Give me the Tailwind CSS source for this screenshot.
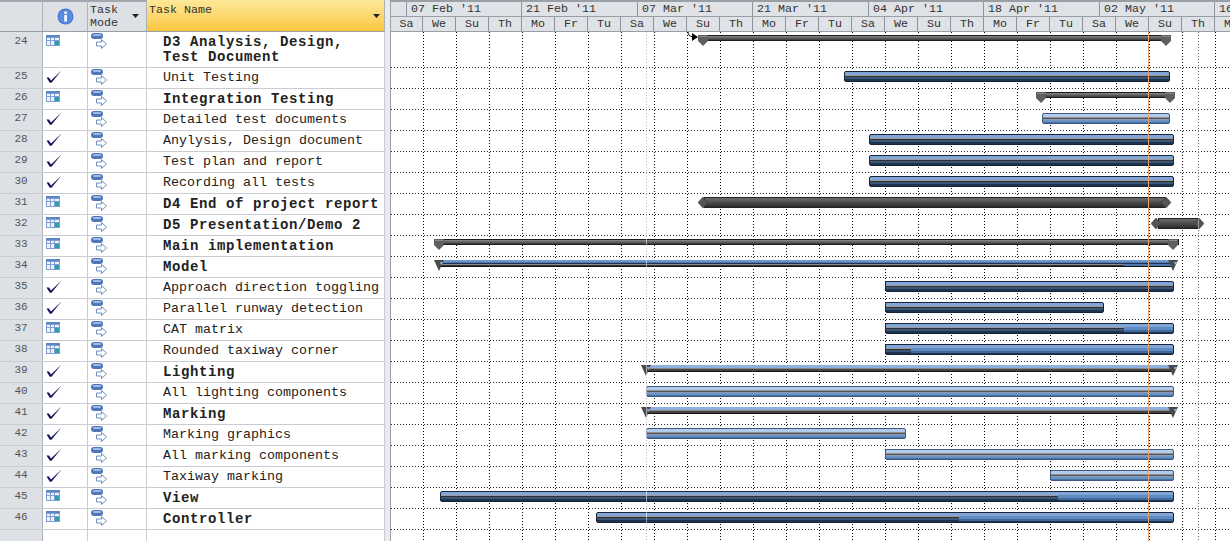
<!DOCTYPE html>
<html>
<head>
<meta charset="utf-8">
<script src="https://cdn.jsdelivr.net/npm/@tailwindcss/browser@4"></script>
</head>
<body class="m-0 bg-white">
<svg class="hidden">
  <symbol id="cal" viewBox="0 0 14 11"><rect width="14" height="11" fill="#7f9fd2"/><rect x="0" y="0" width="14" height="2" fill="#5f86c4"/><g fill="#eef3fb"><rect x="1" y="3" width="3" height="2"/><rect x="5" y="3" width="3" height="2"/><rect x="9" y="3" width="4" height="2"/><rect x="1" y="6" width="3" height="4"/><rect x="5" y="6" width="3" height="4"/></g><rect x="9" y="6" width="4" height="4" fill="#2aa0b0"/></symbol>
  <symbol id="chk" viewBox="0 0 16 13"><path d="M0.5 7.5 L3 7.5 L5 10.5 L15.5 0.5 L5.5 12.8 L3.8 12.8 Z" fill="#14145a"/></symbol>
  <symbol id="mode" viewBox="0 0 16 16"><rect x="0" y="0" width="12" height="6" rx="3" fill="#4f78b8"/><rect x="2" y="1" width="8" height="2" rx="1" fill="#9dbbe6"/><path d="M5.5 9 H10.5 V6.5 L15.5 11 L10.5 15.5 V13 H5.5 Z" fill="#fff" stroke="#6f8fc0"/></symbol>
  <symbol id="capg" viewBox="0 0 10 11"><path d="M0 0 H10 V6 L5 11 L0 6 Z" fill="#5f5f5f"/><path d="M1 1 H9 V2 H1 Z" fill="#8a8a8a"/></symbol>
  <symbol id="capb" viewBox="0 0 10 11"><path d="M0 0 H10 L5 11 Z" fill="#4a4a4a"/><path d="M6 2 H9.5 L7 5 Z" fill="#8fb0de"/></symbol>
  <symbol id="dia" viewBox="0 0 10 11"><path d="M5 0 L10 5.5 L5 11 L0 5.5 Z" fill="#555" stroke="#333" stroke-width="0.5"/></symbol>
</svg>

<div class="flex w-[1230px] h-[541px] overflow-hidden font-['Liberation_Mono',monospace] text-[13.33px] text-[#222]">

  <!-- Task table -->
  <div class="w-[385px] shrink-0 flex flex-col">
    <div class="flex h-[32px] shrink-0 border-b border-[#9a9ea5] text-[11.67px] leading-[13px] text-[#333]">
      <div class="w-[43px] bg-[#dde1e6] border-r border-[#aeb2b8] border-t-2 border-t-[#a3a7ad]"></div>
      <div class="w-[45px] bg-[#dde1e6] border-r border-[#aeb2b8] border-t-2 border-t-[#a3a7ad] flex items-center justify-center">
        <svg width="17" height="17" viewBox="0 0 17 17"><circle cx="8.5" cy="8.5" r="8" fill="#3f74cf"/><circle cx="8.5" cy="8.5" r="7" fill="#5a8ae0"/><rect x="7.3" y="3.5" width="2.6" height="2.4" fill="#fff"/><rect x="7.3" y="7" width="2.6" height="6.5" fill="#fff"/></svg>
      </div>
      <div class="w-[59px] bg-[#dde1e6] border-r border-[#aeb2b8] border-t-2 border-t-[#a3a7ad] pl-[2px] pt-[2px] relative">Task<br>Mode
        <svg class="absolute left-[44px] top-[12px]" width="7" height="4" viewBox="0 0 7 4"><path d="M0 0 H7 L3.5 4 Z" fill="#222"/></svg>
      </div>
      <div class="w-[238px] bg-gradient-to-b from-[#fde999] to-[#fbc63c] border-r border-[#aeb2b8] pl-[2px] pt-[4px] relative">Task Name
        <svg class="absolute left-[226px] top-[14px]" width="7" height="4" viewBox="0 0 7 4"><path d="M0 0 H7 L3.5 4 Z" fill="#222"/></svg>
      </div>
    </div>

    <div class="flex h-[36px] shrink-0 border-b border-[#c9cdd3]">
      <div class="w-[43px] bg-[#dde1e6] border-r border-[#aeb2b8] text-[11px] text-[#555] text-center pt-[1px]">24</div>
      <div class="w-[45px] border-r border-[#c9cdd3] pl-[3px] pt-[3px]"><svg width="14" height="11"><use href="#cal"/></svg></div>
      <div class="w-[59px] border-r border-[#c9cdd3] pl-[3px] pt-[1px]"><svg width="16" height="16"><use href="#mode"/></svg></div>
      <div class="w-[238px] border-r border-[#c9cdd3] pl-[16px] pt-[3px] text-[14px] tracking-[0.6px] leading-[15px] font-bold">D3 Analysis, Design,<br>Test Document</div>
    </div>

    <div class="flex h-[21px] shrink-0 border-b border-[#c9cdd3]"><div class="w-[43px] bg-[#dde1e6] border-r border-[#aeb2b8] text-[11px] text-[#555] text-center leading-[17px]">25</div><div class="w-[45px] border-r border-[#c9cdd3] pl-[3px] pt-[2px]"><svg width="16" height="13"><use href="#chk"/></svg></div><div class="w-[59px] border-r border-[#c9cdd3] pl-[3px] pt-[1px]"><svg width="16" height="16"><use href="#mode"/></svg></div><div class="w-[238px] border-r border-[#c9cdd3] pl-[16px] leading-[19px]">Unit Testing</div></div>
    <div class="flex h-[21px] shrink-0 border-b border-[#c9cdd3]"><div class="w-[43px] bg-[#dde1e6] border-r border-[#aeb2b8] text-[11px] text-[#555] text-center leading-[17px]">26</div><div class="w-[45px] border-r border-[#c9cdd3] pl-[3px] pt-[2px]"><svg width="14" height="11"><use href="#cal"/></svg></div><div class="w-[59px] border-r border-[#c9cdd3] pl-[3px] pt-[1px]"><svg width="16" height="16"><use href="#mode"/></svg></div><div class="w-[238px] border-r border-[#c9cdd3] pl-[16px] leading-[21px] text-[14px] tracking-[0.6px] font-bold">Integration Testing</div></div>
    <div class="flex h-[21px] shrink-0 border-b border-[#c9cdd3]"><div class="w-[43px] bg-[#dde1e6] border-r border-[#aeb2b8] text-[11px] text-[#555] text-center leading-[17px]">27</div><div class="w-[45px] border-r border-[#c9cdd3] pl-[3px] pt-[2px]"><svg width="16" height="13"><use href="#chk"/></svg></div><div class="w-[59px] border-r border-[#c9cdd3] pl-[3px] pt-[1px]"><svg width="16" height="16"><use href="#mode"/></svg></div><div class="w-[238px] border-r border-[#c9cdd3] pl-[16px] leading-[19px]">Detailed test documents</div></div>
    <div class="flex h-[21px] shrink-0 border-b border-[#c9cdd3]"><div class="w-[43px] bg-[#dde1e6] border-r border-[#aeb2b8] text-[11px] text-[#555] text-center leading-[17px]">28</div><div class="w-[45px] border-r border-[#c9cdd3] pl-[3px] pt-[2px]"><svg width="16" height="13"><use href="#chk"/></svg></div><div class="w-[59px] border-r border-[#c9cdd3] pl-[3px] pt-[1px]"><svg width="16" height="16"><use href="#mode"/></svg></div><div class="w-[238px] border-r border-[#c9cdd3] pl-[16px] leading-[19px]">Anylysis, Design document</div></div>
    <div class="flex h-[21px] shrink-0 border-b border-[#c9cdd3]"><div class="w-[43px] bg-[#dde1e6] border-r border-[#aeb2b8] text-[11px] text-[#555] text-center leading-[17px]">29</div><div class="w-[45px] border-r border-[#c9cdd3] pl-[3px] pt-[2px]"><svg width="16" height="13"><use href="#chk"/></svg></div><div class="w-[59px] border-r border-[#c9cdd3] pl-[3px] pt-[1px]"><svg width="16" height="16"><use href="#mode"/></svg></div><div class="w-[238px] border-r border-[#c9cdd3] pl-[16px] leading-[19px]">Test plan and report</div></div>
    <div class="flex h-[21px] shrink-0 border-b border-[#c9cdd3]"><div class="w-[43px] bg-[#dde1e6] border-r border-[#aeb2b8] text-[11px] text-[#555] text-center leading-[17px]">30</div><div class="w-[45px] border-r border-[#c9cdd3] pl-[3px] pt-[2px]"><svg width="16" height="13"><use href="#chk"/></svg></div><div class="w-[59px] border-r border-[#c9cdd3] pl-[3px] pt-[1px]"><svg width="16" height="16"><use href="#mode"/></svg></div><div class="w-[238px] border-r border-[#c9cdd3] pl-[16px] leading-[19px]">Recording all tests</div></div>
    <div class="flex h-[21px] shrink-0 border-b border-[#c9cdd3]"><div class="w-[43px] bg-[#dde1e6] border-r border-[#aeb2b8] text-[11px] text-[#555] text-center leading-[17px]">31</div><div class="w-[45px] border-r border-[#c9cdd3] pl-[3px] pt-[2px]"><svg width="14" height="11"><use href="#cal"/></svg></div><div class="w-[59px] border-r border-[#c9cdd3] pl-[3px] pt-[1px]"><svg width="16" height="16"><use href="#mode"/></svg></div><div class="w-[238px] border-r border-[#c9cdd3] pl-[16px] leading-[21px] text-[14px] tracking-[0.6px] font-bold">D4 End of project report</div></div>
    <div class="flex h-[21px] shrink-0 border-b border-[#c9cdd3]"><div class="w-[43px] bg-[#dde1e6] border-r border-[#aeb2b8] text-[11px] text-[#555] text-center leading-[17px]">32</div><div class="w-[45px] border-r border-[#c9cdd3] pl-[3px] pt-[2px]"><svg width="14" height="11"><use href="#cal"/></svg></div><div class="w-[59px] border-r border-[#c9cdd3] pl-[3px] pt-[1px]"><svg width="16" height="16"><use href="#mode"/></svg></div><div class="w-[238px] border-r border-[#c9cdd3] pl-[16px] leading-[21px] text-[14px] tracking-[0.6px] font-bold">D5 Presentation/Demo 2</div></div>
    <div class="flex h-[21px] shrink-0 border-b border-[#c9cdd3]"><div class="w-[43px] bg-[#dde1e6] border-r border-[#aeb2b8] text-[11px] text-[#555] text-center leading-[17px]">33</div><div class="w-[45px] border-r border-[#c9cdd3] pl-[3px] pt-[2px]"><svg width="14" height="11"><use href="#cal"/></svg></div><div class="w-[59px] border-r border-[#c9cdd3] pl-[3px] pt-[1px]"><svg width="16" height="16"><use href="#mode"/></svg></div><div class="w-[238px] border-r border-[#c9cdd3] pl-[16px] leading-[21px] text-[14px] tracking-[0.6px] font-bold">Main implementation</div></div>
    <div class="flex h-[21px] shrink-0 border-b border-[#c9cdd3]"><div class="w-[43px] bg-[#dde1e6] border-r border-[#aeb2b8] text-[11px] text-[#555] text-center leading-[17px]">34</div><div class="w-[45px] border-r border-[#c9cdd3] pl-[3px] pt-[2px]"><svg width="14" height="11"><use href="#cal"/></svg></div><div class="w-[59px] border-r border-[#c9cdd3] pl-[3px] pt-[1px]"><svg width="16" height="16"><use href="#mode"/></svg></div><div class="w-[238px] border-r border-[#c9cdd3] pl-[16px] leading-[21px] text-[14px] tracking-[0.6px] font-bold">Model</div></div>
    <div class="flex h-[21px] shrink-0 border-b border-[#c9cdd3]"><div class="w-[43px] bg-[#dde1e6] border-r border-[#aeb2b8] text-[11px] text-[#555] text-center leading-[17px]">35</div><div class="w-[45px] border-r border-[#c9cdd3] pl-[3px] pt-[2px]"><svg width="16" height="13"><use href="#chk"/></svg></div><div class="w-[59px] border-r border-[#c9cdd3] pl-[3px] pt-[1px]"><svg width="16" height="16"><use href="#mode"/></svg></div><div class="w-[238px] border-r border-[#c9cdd3] pl-[16px] leading-[19px]">Approach direction toggling</div></div>
    <div class="flex h-[21px] shrink-0 border-b border-[#c9cdd3]"><div class="w-[43px] bg-[#dde1e6] border-r border-[#aeb2b8] text-[11px] text-[#555] text-center leading-[17px]">36</div><div class="w-[45px] border-r border-[#c9cdd3] pl-[3px] pt-[2px]"><svg width="16" height="13"><use href="#chk"/></svg></div><div class="w-[59px] border-r border-[#c9cdd3] pl-[3px] pt-[1px]"><svg width="16" height="16"><use href="#mode"/></svg></div><div class="w-[238px] border-r border-[#c9cdd3] pl-[16px] leading-[19px]">Parallel runway detection</div></div>
    <div class="flex h-[21px] shrink-0 border-b border-[#c9cdd3]"><div class="w-[43px] bg-[#dde1e6] border-r border-[#aeb2b8] text-[11px] text-[#555] text-center leading-[17px]">37</div><div class="w-[45px] border-r border-[#c9cdd3] pl-[3px] pt-[2px]"><svg width="14" height="11"><use href="#cal"/></svg></div><div class="w-[59px] border-r border-[#c9cdd3] pl-[3px] pt-[1px]"><svg width="16" height="16"><use href="#mode"/></svg></div><div class="w-[238px] border-r border-[#c9cdd3] pl-[16px] leading-[19px]">CAT matrix</div></div>
    <div class="flex h-[21px] shrink-0 border-b border-[#c9cdd3]"><div class="w-[43px] bg-[#dde1e6] border-r border-[#aeb2b8] text-[11px] text-[#555] text-center leading-[17px]">38</div><div class="w-[45px] border-r border-[#c9cdd3] pl-[3px] pt-[2px]"><svg width="14" height="11"><use href="#cal"/></svg></div><div class="w-[59px] border-r border-[#c9cdd3] pl-[3px] pt-[1px]"><svg width="16" height="16"><use href="#mode"/></svg></div><div class="w-[238px] border-r border-[#c9cdd3] pl-[16px] leading-[19px]">Rounded taxiway corner</div></div>
    <div class="flex h-[21px] shrink-0 border-b border-[#c9cdd3]"><div class="w-[43px] bg-[#dde1e6] border-r border-[#aeb2b8] text-[11px] text-[#555] text-center leading-[17px]">39</div><div class="w-[45px] border-r border-[#c9cdd3] pl-[3px] pt-[2px]"><svg width="16" height="13"><use href="#chk"/></svg></div><div class="w-[59px] border-r border-[#c9cdd3] pl-[3px] pt-[1px]"><svg width="16" height="16"><use href="#mode"/></svg></div><div class="w-[238px] border-r border-[#c9cdd3] pl-[16px] leading-[21px] text-[14px] tracking-[0.6px] font-bold">Lighting</div></div>
    <div class="flex h-[21px] shrink-0 border-b border-[#c9cdd3]"><div class="w-[43px] bg-[#dde1e6] border-r border-[#aeb2b8] text-[11px] text-[#555] text-center leading-[17px]">40</div><div class="w-[45px] border-r border-[#c9cdd3] pl-[3px] pt-[2px]"><svg width="16" height="13"><use href="#chk"/></svg></div><div class="w-[59px] border-r border-[#c9cdd3] pl-[3px] pt-[1px]"><svg width="16" height="16"><use href="#mode"/></svg></div><div class="w-[238px] border-r border-[#c9cdd3] pl-[16px] leading-[19px]">All lighting components</div></div>
    <div class="flex h-[21px] shrink-0 border-b border-[#c9cdd3]"><div class="w-[43px] bg-[#dde1e6] border-r border-[#aeb2b8] text-[11px] text-[#555] text-center leading-[17px]">41</div><div class="w-[45px] border-r border-[#c9cdd3] pl-[3px] pt-[2px]"><svg width="16" height="13"><use href="#chk"/></svg></div><div class="w-[59px] border-r border-[#c9cdd3] pl-[3px] pt-[1px]"><svg width="16" height="16"><use href="#mode"/></svg></div><div class="w-[238px] border-r border-[#c9cdd3] pl-[16px] leading-[21px] text-[14px] tracking-[0.6px] font-bold">Marking</div></div>
    <div class="flex h-[21px] shrink-0 border-b border-[#c9cdd3]"><div class="w-[43px] bg-[#dde1e6] border-r border-[#aeb2b8] text-[11px] text-[#555] text-center leading-[17px]">42</div><div class="w-[45px] border-r border-[#c9cdd3] pl-[3px] pt-[2px]"><svg width="16" height="13"><use href="#chk"/></svg></div><div class="w-[59px] border-r border-[#c9cdd3] pl-[3px] pt-[1px]"><svg width="16" height="16"><use href="#mode"/></svg></div><div class="w-[238px] border-r border-[#c9cdd3] pl-[16px] leading-[19px]">Marking graphics</div></div>
    <div class="flex h-[21px] shrink-0 border-b border-[#c9cdd3]"><div class="w-[43px] bg-[#dde1e6] border-r border-[#aeb2b8] text-[11px] text-[#555] text-center leading-[17px]">43</div><div class="w-[45px] border-r border-[#c9cdd3] pl-[3px] pt-[2px]"><svg width="16" height="13"><use href="#chk"/></svg></div><div class="w-[59px] border-r border-[#c9cdd3] pl-[3px] pt-[1px]"><svg width="16" height="16"><use href="#mode"/></svg></div><div class="w-[238px] border-r border-[#c9cdd3] pl-[16px] leading-[19px]">All marking components</div></div>
    <div class="flex h-[21px] shrink-0 border-b border-[#c9cdd3]"><div class="w-[43px] bg-[#dde1e6] border-r border-[#aeb2b8] text-[11px] text-[#555] text-center leading-[17px]">44</div><div class="w-[45px] border-r border-[#c9cdd3] pl-[3px] pt-[2px]"><svg width="16" height="13"><use href="#chk"/></svg></div><div class="w-[59px] border-r border-[#c9cdd3] pl-[3px] pt-[1px]"><svg width="16" height="16"><use href="#mode"/></svg></div><div class="w-[238px] border-r border-[#c9cdd3] pl-[16px] leading-[19px]">Taxiway marking</div></div>
    <div class="flex h-[21px] shrink-0 border-b border-[#c9cdd3]"><div class="w-[43px] bg-[#dde1e6] border-r border-[#aeb2b8] text-[11px] text-[#555] text-center leading-[17px]">45</div><div class="w-[45px] border-r border-[#c9cdd3] pl-[3px] pt-[2px]"><svg width="14" height="11"><use href="#cal"/></svg></div><div class="w-[59px] border-r border-[#c9cdd3] pl-[3px] pt-[1px]"><svg width="16" height="16"><use href="#mode"/></svg></div><div class="w-[238px] border-r border-[#c9cdd3] pl-[16px] leading-[21px] text-[14px] tracking-[0.6px] font-bold">View</div></div>
    <div class="flex h-[21px] shrink-0 border-b border-[#c9cdd3]"><div class="w-[43px] bg-[#dde1e6] border-r border-[#aeb2b8] text-[11px] text-[#555] text-center leading-[17px]">46</div><div class="w-[45px] border-r border-[#c9cdd3] pl-[3px] pt-[2px]"><svg width="14" height="11"><use href="#cal"/></svg></div><div class="w-[59px] border-r border-[#c9cdd3] pl-[3px] pt-[1px]"><svg width="16" height="16"><use href="#mode"/></svg></div><div class="w-[238px] border-r border-[#c9cdd3] pl-[16px] leading-[21px] text-[14px] tracking-[0.6px] font-bold">Controller</div></div>

    <div class="flex flex-1">
      <div class="w-[43px] bg-[#dde1e6] border-r border-[#aeb2b8]"></div>
      <div class="w-[45px] border-r border-[#c9cdd3]"></div>
      <div class="w-[59px] border-r border-[#c9cdd3]"></div>
      <div class="w-[238px] border-r border-[#c9cdd3]"></div>
    </div>
  </div>

  <!-- Splitter -->
  <div class="w-[6px] shrink-0 bg-[#e9ebee] border-r border-[#9a9ea5]"></div>

  <!-- Gantt chart -->
  <div class="relative w-[839px] shrink-0 flex flex-col overflow-hidden">
    <div class="h-[32px] shrink-0 flex flex-col bg-[#dfe2e6] border-t-2 border-[#9a9ea5] border-b text-[11.67px] text-[#333] whitespace-nowrap">
      <div class="flex h-[15px] border-b border-[#9a9ea5] leading-[14px]">
        <div class="w-[16px] shrink-0 border-r border-[#8f949c]"></div>
        <div class="w-[115px] shrink-0 border-r border-[#8f949c] pl-[4px]">07 Feb '11</div>
        <div class="w-[116px] shrink-0 border-r border-[#8f949c] pl-[4px]">21 Feb '11</div>
        <div class="w-[115px] shrink-0 border-r border-[#8f949c] pl-[4px]">07 Mar '11</div>
        <div class="w-[116px] shrink-0 border-r border-[#8f949c] pl-[4px]">21 Mar '11</div>
        <div class="w-[115px] shrink-0 border-r border-[#8f949c] pl-[4px]">04 Apr '11</div>
        <div class="w-[116px] shrink-0 border-r border-[#8f949c] pl-[4px]">18 Apr '11</div>
        <div class="w-[115px] shrink-0 border-r border-[#8f949c] pl-[4px]">02 May '11</div>
        <div class="w-[116px] shrink-0 pl-[4px]">16 May '11</div>
      </div>
      <div class="flex h-[15px] leading-[14px] text-center">
        <div class="w-[32px] shrink-0 border-r border-[#8f949c]">Sa</div>
        <div class="w-[33px] shrink-0 border-r border-[#8f949c]">We</div>
        <div class="w-[33px] shrink-0 border-r border-[#8f949c]">Su</div>
        <div class="w-[33px] shrink-0 border-r border-[#8f949c]">Th</div>
        <div class="w-[33px] shrink-0 border-r border-[#8f949c]">Mo</div>
        <div class="w-[33px] shrink-0 border-r border-[#8f949c]">Fr</div>
        <div class="w-[33px] shrink-0 border-r border-[#8f949c]">Tu</div>
        <div class="w-[33px] shrink-0 border-r border-[#8f949c]">Sa</div>
        <div class="w-[33px] shrink-0 border-r border-[#8f949c]">We</div>
        <div class="w-[33px] shrink-0 border-r border-[#8f949c]">Su</div>
        <div class="w-[33px] shrink-0 border-r border-[#8f949c]">Th</div>
        <div class="w-[33px] shrink-0 border-r border-[#8f949c]">Mo</div>
        <div class="w-[33px] shrink-0 border-r border-[#8f949c]">Fr</div>
        <div class="w-[33px] shrink-0 border-r border-[#8f949c]">Tu</div>
        <div class="w-[33px] shrink-0 border-r border-[#8f949c]">Sa</div>
        <div class="w-[33px] shrink-0 border-r border-[#8f949c]">We</div>
        <div class="w-[33px] shrink-0 border-r border-[#8f949c]">Su</div>
        <div class="w-[33px] shrink-0 border-r border-[#8f949c]">Th</div>
        <div class="w-[33px] shrink-0 border-r border-[#8f949c]">Mo</div>
        <div class="w-[33px] shrink-0 border-r border-[#8f949c]">Fr</div>
        <div class="w-[33px] shrink-0 border-r border-[#8f949c]">Tu</div>
        <div class="w-[33px] shrink-0 border-r border-[#8f949c]">Sa</div>
        <div class="w-[33px] shrink-0 border-r border-[#8f949c]">We</div>
        <div class="w-[33px] shrink-0 border-r border-[#8f949c]">Su</div>
        <div class="w-[33px] shrink-0 border-r border-[#8f949c]">Th</div>
        <div class="w-[33px] shrink-0 border-r border-[#8f949c]">Mo</div>
      </div>
    </div>

    <div class="relative flex-1">
      <!-- vertical dotted grid -->
      <svg class="absolute left-0 top-0" width="839" height="509">
        <defs>
          <pattern id="vdots" x="32" y="0" width="33" height="3" patternUnits="userSpaceOnUse"><rect width="1" height="1" fill="#000"/></pattern>
          <pattern id="vgrey" x="255" y="0" width="3" height="3" patternUnits="userSpaceOnUse"><rect width="1" height="1" fill="#777"/></pattern>
          <pattern id="vblack" x="807" y="0" width="3" height="3" patternUnits="userSpaceOnUse"><rect width="1" height="1" fill="#000"/></pattern>
        </defs>
        <rect width="839" height="509" fill="url(#vdots)"/>
        <rect x="255" width="1" height="509" fill="url(#vgrey)"/>
        <rect x="807" width="1" height="509" fill="url(#vblack)"/>
      </svg>

      <!-- chart rows -->
      <div class="relative flex flex-col">
        <div class="relative h-[36px] bg-[repeating-linear-gradient(to_right,#222_0_1px,transparent_1px_3px)] bg-bottom bg-no-repeat bg-[size:100%_1px]">
          <svg class="absolute left-[296px] top-0" width="11" height="10" viewBox="0 0 11 10"><path d="M1 0 Q1 4 6 5" fill="none" stroke="#000"/><path d="M5 1 L11 5 L5 9 Z" fill="#000"/></svg>
          <div class="absolute left-[307px] w-[473px] top-[3px] h-[6px] border border-[#1c1c1c] bg-gradient-to-b from-[#8a8a8a] to-[#3a3a3a]"></div>
          <svg class="absolute left-[307px] top-[3px]" width="10" height="11"><use href="#capg"/></svg>
          <svg class="absolute left-[770px] top-[3px]" width="10" height="11"><use href="#capg"/></svg>
        </div>
        <div class="relative h-[21px] bg-[repeating-linear-gradient(to_right,#222_0_1px,transparent_1px_3px)] bg-bottom bg-no-repeat bg-[size:100%_1px]">
          <div class="absolute left-[453px] w-[326px] top-[3px] h-[11px] rounded-[2px] overflow-hidden border border-[#16243a] bg-[linear-gradient(to_bottom,#82a6d8_0_3px,#4e78ae_3px_6px,#2e4a72_6px_100%)]"><div class="absolute left-0 right-0 top-[3px] bottom-0 bg-[linear-gradient(to_bottom,#9a9a9a_0_1px,#333_1px_2px,#3a5678_2px_4px,#1f3350_4px_100%)]"></div></div>
        </div>
        <div class="relative h-[21px] bg-[repeating-linear-gradient(to_right,#222_0_1px,transparent_1px_3px)] bg-bottom bg-no-repeat bg-[size:100%_1px]">
          <div class="absolute left-[645px] w-[139px] top-[3px] h-[6px] border border-[#1c1c1c] bg-gradient-to-b from-[#8a8a8a] to-[#3a3a3a]"></div>
          <svg class="absolute left-[645px] top-[3px]" width="10" height="11"><use href="#capg"/></svg>
          <svg class="absolute left-[774px] top-[3px]" width="10" height="11"><use href="#capg"/></svg>
        </div>
        <div class="relative h-[21px] bg-[repeating-linear-gradient(to_right,#222_0_1px,transparent_1px_3px)] bg-bottom bg-no-repeat bg-[size:100%_1px]">
          <div class="absolute left-[651px] w-[128px] top-[3px] h-[11px] rounded-[2px] overflow-hidden border border-[#3c5a85] bg-[linear-gradient(to_bottom,#b3cbec_0_3px,#8f8f8f_3px_4px,#555_4px_5px,#8a9cb8_5px_6px,#6a92c6_6px_8px,#46709f_8px_100%)]"></div>
        </div>
        <div class="relative h-[21px] bg-[repeating-linear-gradient(to_right,#222_0_1px,transparent_1px_3px)] bg-bottom bg-no-repeat bg-[size:100%_1px]">
          <div class="absolute left-[478px] w-[305px] top-[3px] h-[11px] rounded-[2px] overflow-hidden border border-[#16243a] bg-[linear-gradient(to_bottom,#82a6d8_0_3px,#4e78ae_3px_6px,#2e4a72_6px_100%)]"><div class="absolute left-0 right-0 top-[3px] bottom-0 bg-[linear-gradient(to_bottom,#9a9a9a_0_1px,#333_1px_2px,#3a5678_2px_4px,#1f3350_4px_100%)]"></div></div>
        </div>
        <div class="relative h-[21px] bg-[repeating-linear-gradient(to_right,#222_0_1px,transparent_1px_3px)] bg-bottom bg-no-repeat bg-[size:100%_1px]">
          <div class="absolute left-[478px] w-[305px] top-[3px] h-[11px] rounded-[2px] overflow-hidden border border-[#16243a] bg-[linear-gradient(to_bottom,#82a6d8_0_3px,#4e78ae_3px_6px,#2e4a72_6px_100%)]"><div class="absolute left-0 right-0 top-[3px] bottom-0 bg-[linear-gradient(to_bottom,#9a9a9a_0_1px,#333_1px_2px,#3a5678_2px_4px,#1f3350_4px_100%)]"></div></div>
        </div>
        <div class="relative h-[21px] bg-[repeating-linear-gradient(to_right,#222_0_1px,transparent_1px_3px)] bg-bottom bg-no-repeat bg-[size:100%_1px]">
          <div class="absolute left-[478px] w-[305px] top-[3px] h-[11px] rounded-[2px] overflow-hidden border border-[#16243a] bg-[linear-gradient(to_bottom,#82a6d8_0_3px,#4e78ae_3px_6px,#2e4a72_6px_100%)]"><div class="absolute left-0 right-0 top-[3px] bottom-0 bg-[linear-gradient(to_bottom,#9a9a9a_0_1px,#333_1px_2px,#3a5678_2px_4px,#1f3350_4px_100%)]"></div></div>
        </div>
        <div class="relative h-[21px] bg-[repeating-linear-gradient(to_right,#222_0_1px,transparent_1px_3px)] bg-bottom bg-no-repeat bg-[size:100%_1px]">
          <div class="absolute left-[313px] w-[461px] top-[3px] h-[11px] border border-[#222] bg-gradient-to-b from-[#6e6e6e] to-[#2c2c2c]"></div>
          <svg class="absolute left-[307px] top-[3px]" width="10" height="11"><use href="#dia"/></svg>
          <svg class="absolute left-[770px] top-[3px]" width="10" height="11"><use href="#dia"/></svg>
        </div>
        <div class="relative h-[21px] bg-[repeating-linear-gradient(to_right,#222_0_1px,transparent_1px_3px)] bg-bottom bg-no-repeat bg-[size:100%_1px]">
          <div class="absolute left-[767px] w-[40px] top-[3px] h-[11px] border border-[#222] bg-gradient-to-b from-[#6e6e6e] to-[#2c2c2c]"></div>
          <svg class="absolute left-[760px] top-[3px]" width="10" height="11"><use href="#dia"/></svg>
          <svg class="absolute left-[803px] top-[3px]" width="10" height="11"><use href="#dia"/></svg>
        </div>
        <div class="relative h-[21px] bg-[repeating-linear-gradient(to_right,#222_0_1px,transparent_1px_3px)] bg-bottom bg-no-repeat bg-[size:100%_1px]">
          <div class="absolute left-[43px] w-[745px] top-[3px] h-[6px] border border-[#1c1c1c] bg-gradient-to-b from-[#8a8a8a] to-[#3a3a3a]"></div>
          <svg class="absolute left-[43px] top-[3px]" width="10" height="11"><use href="#capg"/></svg>
          <svg class="absolute left-[777px] top-[3px]" width="10" height="11"><use href="#capg"/></svg>
        </div>
        <div class="relative h-[21px] bg-[repeating-linear-gradient(to_right,#222_0_1px,transparent_1px_3px)] bg-bottom bg-no-repeat bg-[size:100%_1px]">
          <div class="absolute left-[48px] w-[735px] top-[3px] h-[7px] overflow-hidden border-b border-[#111] bg-[linear-gradient(to_bottom,#6f97cf_0_2px,#4e78ae_2px_100%)]"><div class="absolute left-0 w-[685px] top-[3px] bottom-0 bg-[linear-gradient(to_bottom,#1e3553_0_1px,#8a8a8a_1px_2px,#333_2px_100%)]"></div><div class="absolute left-[685px] right-0 top-[3px] h-[1px] bg-[#1e3553]"></div></div>
          <svg class="absolute left-[43px] top-[3px]" width="10" height="11"><use href="#capb"/></svg>
          <svg class="absolute left-[777px] top-[3px]" width="10" height="11"><use href="#capb"/></svg>
        </div>
        <div class="relative h-[21px] bg-[repeating-linear-gradient(to_right,#222_0_1px,transparent_1px_3px)] bg-bottom bg-no-repeat bg-[size:100%_1px]">
          <div class="absolute left-[494px] w-[289px] top-[3px] h-[11px] rounded-[2px] overflow-hidden border border-[#16243a] bg-[linear-gradient(to_bottom,#82a6d8_0_3px,#4e78ae_3px_6px,#2e4a72_6px_100%)]"><div class="absolute left-0 right-0 top-[3px] bottom-0 bg-[linear-gradient(to_bottom,#9a9a9a_0_1px,#333_1px_2px,#3a5678_2px_4px,#1f3350_4px_100%)]"></div></div>
        </div>
        <div class="relative h-[21px] bg-[repeating-linear-gradient(to_right,#222_0_1px,transparent_1px_3px)] bg-bottom bg-no-repeat bg-[size:100%_1px]">
          <div class="absolute left-[494px] w-[219px] top-[3px] h-[11px] rounded-[2px] overflow-hidden border border-[#16243a] bg-[linear-gradient(to_bottom,#82a6d8_0_3px,#4e78ae_3px_6px,#2e4a72_6px_100%)]"><div class="absolute left-0 right-0 top-[3px] bottom-0 bg-[linear-gradient(to_bottom,#9a9a9a_0_1px,#333_1px_2px,#3a5678_2px_4px,#1f3350_4px_100%)]"></div></div>
        </div>
        <div class="relative h-[21px] bg-[repeating-linear-gradient(to_right,#222_0_1px,transparent_1px_3px)] bg-bottom bg-no-repeat bg-[size:100%_1px]">
          <div class="absolute left-[494px] w-[289px] top-[3px] h-[11px] rounded-[2px] overflow-hidden border border-[#16243a] bg-[linear-gradient(to_bottom,#82a6d8_0_3px,#5f8ac2_3px_6px,#3f6899_6px_8px,#1e3553_8px_100%)]"><div class="absolute left-0 w-[238px] top-[3px] bottom-0 bg-[linear-gradient(to_bottom,#9a9a9a_0_1px,#333_1px_2px,#3a5678_2px_4px,#1f3350_4px_100%)]"></div></div>
        </div>
        <div class="relative h-[21px] bg-[repeating-linear-gradient(to_right,#222_0_1px,transparent_1px_3px)] bg-bottom bg-no-repeat bg-[size:100%_1px]">
          <div class="absolute left-[494px] w-[289px] top-[3px] h-[11px] rounded-[2px] overflow-hidden border border-[#16243a] bg-[linear-gradient(to_bottom,#82a6d8_0_3px,#5f8ac2_3px_6px,#3f6899_6px_8px,#1e3553_8px_100%)]"><div class="absolute left-0 w-[25px] top-[3px] bottom-0 bg-[linear-gradient(to_bottom,#9a9a9a_0_1px,#333_1px_2px,#3a5678_2px_4px,#1f3350_4px_100%)]"></div></div>
        </div>
        <div class="relative h-[21px] bg-[repeating-linear-gradient(to_right,#222_0_1px,transparent_1px_3px)] bg-bottom bg-no-repeat bg-[size:100%_1px]">
          <div class="absolute left-[255px] w-[528px] top-[3px] h-[7px] overflow-hidden border-b border-[#111] bg-[linear-gradient(to_bottom,#8fb0de_0_3px,#8a8a8a_3px_4px,#444_4px_100%)]"></div>
          <svg class="absolute left-[250px] top-[3px]" width="10" height="11"><use href="#capb"/></svg>
          <svg class="absolute left-[777px] top-[3px]" width="10" height="11"><use href="#capb"/></svg>
        </div>
        <div class="relative h-[21px] bg-[repeating-linear-gradient(to_right,#222_0_1px,transparent_1px_3px)] bg-bottom bg-no-repeat bg-[size:100%_1px]">
          <div class="absolute left-[255px] w-[528px] top-[3px] h-[11px] rounded-[2px] overflow-hidden border border-[#3c5a85] bg-[linear-gradient(to_bottom,#b3cbec_0_3px,#8f8f8f_3px_4px,#555_4px_5px,#8a9cb8_5px_6px,#6a92c6_6px_8px,#46709f_8px_100%)]"></div>
        </div>
        <div class="relative h-[21px] bg-[repeating-linear-gradient(to_right,#222_0_1px,transparent_1px_3px)] bg-bottom bg-no-repeat bg-[size:100%_1px]">
          <div class="absolute left-[255px] w-[528px] top-[3px] h-[7px] overflow-hidden border-b border-[#111] bg-[linear-gradient(to_bottom,#8fb0de_0_3px,#8a8a8a_3px_4px,#444_4px_100%)]"></div>
          <svg class="absolute left-[250px] top-[3px]" width="10" height="11"><use href="#capb"/></svg>
          <svg class="absolute left-[777px] top-[3px]" width="10" height="11"><use href="#capb"/></svg>
        </div>
        <div class="relative h-[21px] bg-[repeating-linear-gradient(to_right,#222_0_1px,transparent_1px_3px)] bg-bottom bg-no-repeat bg-[size:100%_1px]">
          <div class="absolute left-[255px] w-[260px] top-[3px] h-[11px] rounded-[2px] overflow-hidden border border-[#3c5a85] bg-[linear-gradient(to_bottom,#b3cbec_0_3px,#8f8f8f_3px_4px,#555_4px_5px,#8a9cb8_5px_6px,#6a92c6_6px_8px,#46709f_8px_100%)]"></div>
        </div>
        <div class="relative h-[21px] bg-[repeating-linear-gradient(to_right,#222_0_1px,transparent_1px_3px)] bg-bottom bg-no-repeat bg-[size:100%_1px]">
          <div class="absolute left-[494px] w-[289px] top-[3px] h-[11px] rounded-[2px] overflow-hidden border border-[#3c5a85] bg-[linear-gradient(to_bottom,#b3cbec_0_3px,#8f8f8f_3px_4px,#555_4px_5px,#8a9cb8_5px_6px,#6a92c6_6px_8px,#46709f_8px_100%)]"></div>
        </div>
        <div class="relative h-[21px] bg-[repeating-linear-gradient(to_right,#222_0_1px,transparent_1px_3px)] bg-bottom bg-no-repeat bg-[size:100%_1px]">
          <div class="absolute left-[659px] w-[124px] top-[3px] h-[11px] rounded-[2px] overflow-hidden border border-[#3c5a85] bg-[linear-gradient(to_bottom,#b3cbec_0_3px,#8f8f8f_3px_4px,#555_4px_5px,#8a9cb8_5px_6px,#6a92c6_6px_8px,#46709f_8px_100%)]"></div>
        </div>
        <div class="relative h-[21px] bg-[repeating-linear-gradient(to_right,#222_0_1px,transparent_1px_3px)] bg-bottom bg-no-repeat bg-[size:100%_1px]">
          <div class="absolute left-[49px] w-[734px] top-[3px] h-[11px] rounded-[2px] overflow-hidden border border-[#16243a] bg-[linear-gradient(to_bottom,#82a6d8_0_3px,#5f8ac2_3px_6px,#3f6899_6px_8px,#1e3553_8px_100%)]"><div class="absolute left-0 w-[617px] top-[3px] bottom-0 bg-[linear-gradient(to_bottom,#9a9a9a_0_1px,#333_1px_2px,#3a5678_2px_4px,#1f3350_4px_100%)]"></div></div>
        </div>
        <div class="relative h-[21px] bg-[repeating-linear-gradient(to_right,#222_0_1px,transparent_1px_3px)] bg-bottom bg-no-repeat bg-[size:100%_1px]">
          <div class="absolute left-[205px] w-[578px] top-[3px] h-[11px] rounded-[2px] overflow-hidden border border-[#16243a] bg-[linear-gradient(to_bottom,#82a6d8_0_3px,#5f8ac2_3px_6px,#3f6899_6px_8px,#1e3553_8px_100%)]"><div class="absolute left-0 w-[362px] top-[3px] bottom-0 bg-[linear-gradient(to_bottom,#9a9a9a_0_1px,#333_1px_2px,#3a5678_2px_4px,#1f3350_4px_100%)]"></div></div>
        </div>
      </div>

      <!-- overlay lines -->
      <div class="absolute left-[255px] top-0 bottom-0 w-px bg-white/50"></div>
      <div class="absolute left-[807px] top-0 bottom-0 w-px bg-white/40"></div>
      <div class="absolute left-[757px] top-0 bottom-0 w-px bg-[#e8a26a]"></div>
    </div>
  </div>
</div>
</body>
</html>
